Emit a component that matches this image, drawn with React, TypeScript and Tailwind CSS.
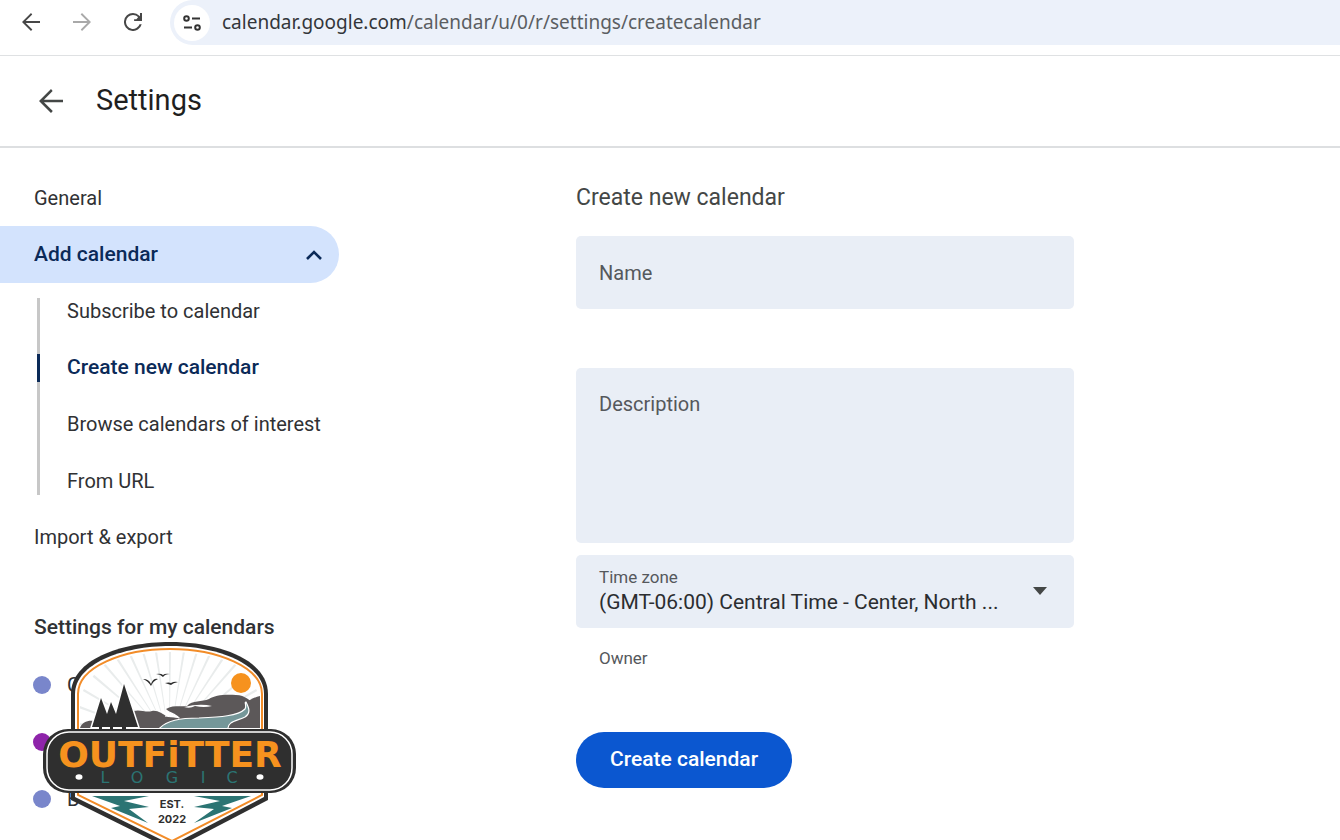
import type { ReactNode } from 'react'

const subItems = ['Subscribe to calendar', 'Create new calendar', 'Browse calendars of interest', 'From URL']

const calendars = [
  { name: 'G', color: 'bg-[#7986cb]' },
  { name: 'Holidays in United States', color: 'bg-[#8e24aa]' },
  { name: 'B', color: 'bg-[#7986cb]' },
]

const rays = [-80, -70, -60, -50, -41, -33, -25, -17, -9, 0, 9, 17, 25, 33, 41, 50, 60, 70, 80]

function IconButton({ label, className, children }: { label: string; className?: string; children: ReactNode }) {
  return (
    <button type="button" aria-label={label} className={`flex items-center justify-center ${className ?? ''}`}>
      {children}
    </button>
  )
}

function ArrowLeft({ className }: { className?: string }) {
  return (
    <svg viewBox="4 4 16 16" fill="currentColor" className={className} aria-hidden="true">
      <path d="M20 11.200H7.300l5.800-5.800L12 4l-8 8 8 8 1.200-1.300L7.300 12.800H20z" />
    </svg>
  )
}

function BrowserBar() {
  return (
    <div className="flex h-14 items-start border-b border-[#dfe1e3]">
      <div className="flex h-11 w-[170px] shrink-0 items-center gap-[33px] pl-[22px] text-[#474747]">
        <IconButton label="Back"><ArrowLeft className="size-[18px]" /></IconButton>
        <IconButton label="Forward" className="text-[#a9a9a9]"><ArrowLeft className="size-[18px] rotate-180" /></IconButton>
        <IconButton label="Reload">
          <svg viewBox="4 4 16 16" fill="currentColor" className="size-[18px]" aria-hidden="true">
            <path d="M17.650 6.350A7.960 7.960 0 0 0 12 4a8 8 0 1 0 7.730 10h-1.900A6.200 6.200 0 1 1 12 5.800c1.800 0 3.400.8 4.500 2L15 9.500h-2V11h7V4h-1.800v2.900z" />
          </svg>
        </IconButton>
      </div>
      <div className="flex h-[45px] min-w-0 grow items-center rounded-l-full bg-[#ecf1fa] pl-1">
        <IconButton label="View site information" className="size-[36px] shrink-0 rounded-full bg-white text-[#333]">
          <svg viewBox="0 0 20 18" fill="none" stroke="currentColor" strokeWidth="2" className="h-[18px] w-5" aria-hidden="true">
            <circle cx="4.500" cy="4.500" r="2.300" />
            <path d="M10 4.500h8M2 13.500h8" />
            <circle cx="15.500" cy="13.500" r="2.300" />
          </svg>
        </IconButton>
        <p className="truncate pl-3 font-['Noto_Sans','Open_Sans',sans-serif] text-[19px] text-[#5b5e62]">
          <span className="text-[#33363a]">calendar.google.com</span>/calendar/u/0/r/settings/createcalendar
        </p>
      </div>
    </div>
  )
}

function Sidebar() {
  return (
    <nav className="w-[339px] shrink-0 pt-[22px] text-[20px]">
      <a href="#general" className="flex h-14 items-center pl-[34px]">General</a>
      <button
        type="button"
        aria-expanded="true"
        className="flex h-[57px] w-full items-center justify-between rounded-r-full bg-[#d3e3fd] pr-4 pl-[34px] text-[21px] font-medium text-[#0b2a58]"
      >
        Add calendar
        <svg viewBox="0 0 18 12" fill="none" stroke="currentColor" strokeWidth="2.600" className="h-3 w-[18px]" aria-hidden="true">
          <path d="M2 10l7-7 7 7" />
        </svg>
      </button>
      <div className="flex h-[226px] pl-[37px]">
        <div className="mt-[15px] mb-[14px] w-[3px] bg-[#c7c7c7] pt-14">
          <div className="h-7 bg-[#0b2a58]" />
        </div>
        <ul className="grid grow grid-rows-4 items-center pl-[27px]">
          {subItems.map((item) => (
            <li key={item}>
              <a
                href="#add"
                className={
                  item === 'Create new calendar'
                    ? 'text-[21px] font-medium whitespace-nowrap text-[#0b2a58]'
                    : 'whitespace-nowrap'
                }
              >
                {item}
              </a>
            </li>
          ))}
        </ul>
      </div>
      <a href="#import" className="flex h-14 items-center pl-[34px]">Import &amp; export</a>

      <div className="relative pt-[34px]">
        <h2 className="pl-[34px] text-[21px] leading-[57px] font-medium">Settings for my calendars</h2>
        <ul>
          {calendars.map((calendar) => (
            <li key={calendar.name} className="flex h-[57px] items-center gap-4 pl-[33px]">
              <span className={`size-[18px] rounded-full ${calendar.color}`} />
              {calendar.name}
            </li>
          ))}
        </ul>
        <Badge />
      </div>
    </nav>
  )
}

// Coordinates follow the 260x200 badge, the tip runs below the fold
function Badge() {
  return (
    <svg
      viewBox="40 640 260 200"
      className="absolute top-[75px] left-10 h-[200px] w-[260px]"
      role="img"
      aria-label="Outfitter Logic, est. 2022"
    >
      <defs>
        <clipPath id="scene">
          <path d="M80 728V694C80 668 124 652 170 652S260 668 260 694V728Z" />
        </clipPath>
      </defs>

      <path d="M71 800V694C71 660 120 642 170 642S268 660 268 694V800L172 850Z" fill="#2f2f2f" />
      <path d="M75 797V694C75 664 122 646 170 646S264 664 264 694V797L172 845Z" fill="#fff" />
      <path d="M78 795V694C78 667 123 649 170 649S262 667 262 694V795L172 841Z" fill="#fff" stroke="#f28c28" strokeWidth="2" />

      <g clipPath="url(#scene)">
        {rays.map((angle) => (
          <path key={angle} d="M169.500 740L168.800 640H171.200Z" fill="#e9ecec" transform={`rotate(${angle} 170 740)`} />
        ))}
        <path d="M80 728C82 722 88 720 94 721L106 722L134 711C140 709 146 713 152 711C158 710 162 714 168 717L180 718C174 712 170 713 166 709C172 705 180 707 187 706C192 700 202 702 209 699C214 695 226 694 236 695C246 695 250 702 257 705V728Z" fill="#5c5859" />
        <path d="M243 705Q253 697 260 696V728H240Z" fill="#5c5859" />
        <path d="M184 707Q200 703 212 706Q204 708 195 706Q190 709 184 707M158 711Q172 711 180 719Q170 715 165 717Q168 714 158 711Z" fill="#fff" />
        <path d="M158 730C166 720 181 718 199 718C220 717 238 716 245 709C247 706 244 702 246 702C249 708 251 713 245 717C237 721 227 721 228 730Z" fill="#759799" stroke="#fff" strokeWidth="1.200" />
      </g>
      <path d="M92 727L101 698L107 714L111 702L116 714L124 684L138 727Z" fill="#2f2f2f" stroke="#fff" strokeWidth="3" paintOrder="stroke" />
      <path d="M99 725h3v5h-3zM110 725h3v5h-3zM122 725h4v5h-4z" fill="#2f2f2f" />
      <path d="M143 679Q149 679 151 684Q153 678 158 679Q153 681 151 686Q148 681 143 679ZM156 674Q161 673 163 675Q165 673 170 674Q165 674 163 677Q160 674 156 674ZM165 683Q169 682 171 683Q174 681 178 682Q173 683 171 685Z" fill="#2f2f2f" />
      <circle cx="241" cy="683" r="10" fill="#f6921e" />

      <g fill="#2b7473">
        <path d="M92 796H149L124 801L149 807L129 809L148 823L111 808L120 806Z" />
        <path d="M251 796H194L220 801L194 807L214 809L194 823L232 808L222 806Z" />
      </g>

      <rect x="43" y="729" width="253" height="64" rx="25" fill="#2f2f2f" />
      <rect x="47" y="732" width="245" height="58" rx="22" fill="#2f2f2f" stroke="#fff" strokeWidth="1.500" />
      <text x="170" y="767" textAnchor="middle" fontSize="36" fontWeight="900" fill="#f6921e" className="font-['DejaVu_Sans',sans-serif]">
        OUTFiTTER
      </text>
      <g fill="#2b7473" fontSize="16" textAnchor="middle" className="font-['DejaVu_Sans',sans-serif]">
        <text x="105" y="783">L</text>
        <text x="137" y="783">O</text>
        <text x="172" y="783">G</text>
        <text x="203" y="783">I</text>
        <text x="232" y="783">C</text>
      </g>
      <ellipse cx="79" cy="777" rx="3.500" ry="2.800" fill="#fff" />
      <ellipse cx="260" cy="777" rx="3.500" ry="2.800" fill="#fff" />
      <g fill="#2f2f2f" fontSize="11" fontWeight="700" textAnchor="middle" className="font-['Inter',sans-serif]">
        <text x="172" y="808">EST.</text>
        <text x="172" y="823">2022</text>
      </g>
    </svg>
  )
}

function CalendarForm() {
  return (
    <form className="flex max-w-[498px] grow flex-col items-stretch pt-[34px]">
      <h2 className="text-[23px] leading-8 text-[#444746]">Create new calendar</h2>
      <input
        aria-label="Name"
        placeholder="Name"
        className="mt-[22px] h-[73px] rounded-[5px] bg-[#e9eef6] px-[23px] text-[20px] placeholder:text-[#55585c]"
      />
      <textarea
        aria-label="Description"
        placeholder="Description"
        className="mt-[59px] h-[175px] resize-none rounded-[5px] bg-[#e9eef6] px-[23px] py-[21px] text-[20px] placeholder:text-[#55585c]"
      />
      <div className="relative mt-3 h-[73px] rounded-[5px] bg-[#e9eef6]">
        <label htmlFor="timezone" className="absolute top-3 left-[23px] text-[17px] leading-5 text-[#55585c]">Time zone</label>
        <select id="timezone" className="size-full appearance-none truncate pt-[23px] pr-[60px] pl-[23px] text-[21px] text-[#2b2d30]">
          <option>(GMT-06:00) Central Time - Center, North ...</option>
        </select>
        <svg viewBox="0 0 14 8" className="pointer-events-none absolute top-8 right-[27px] h-2 w-[14px]" aria-hidden="true">
          <path d="M0 0h14L7 8Z" fill="#444746" />
        </svg>
      </div>
      <p className="mt-5 pl-[23px] text-[17px] leading-5 text-[#55585c]">Owner</p>
      <button type="submit" className="mt-16 h-14 self-start rounded-full bg-[#0b57d0] px-[34px] text-[21px] font-medium text-white">
        Create calendar
      </button>
    </form>
  )
}

export default function App() {
  return (
    <div className="h-screen overflow-hidden bg-white font-['Roboto',sans-serif] text-[#303134]">
      <BrowserBar />
      <header className="flex h-[92px] items-center gap-[33px] border-b-2 border-[#dddfe1] pl-[39px]">
        <IconButton label="Go back" className="text-[#444746]"><ArrowLeft className="size-6" /></IconButton>
        <h1 className="text-[29px] text-[#1f1f1f]">Settings</h1>
      </header>
      <main className="flex gap-[237px]">
        <Sidebar />
        <CalendarForm />
      </main>
    </div>
  )
}
